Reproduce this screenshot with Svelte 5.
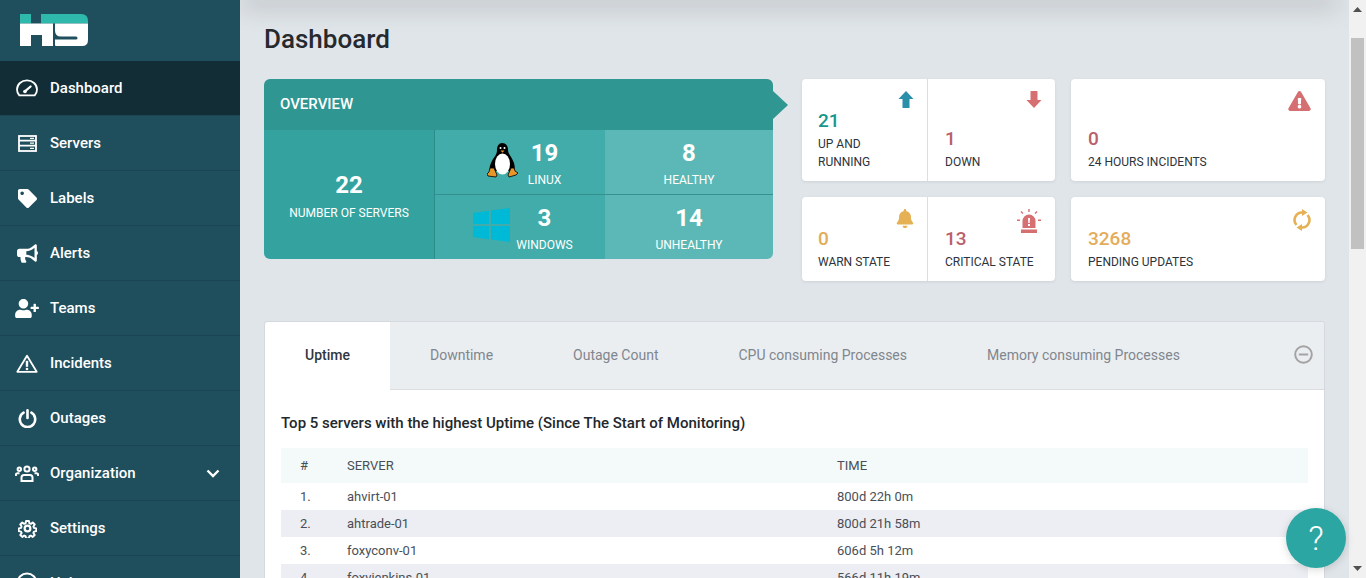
<script>
  const I = {
    tag: ['0 0 512 512', 'M0 252.118V48C0 21.49 21.49 0 48 0h204.118a48 48 0 0 1 33.941 14.059l211.882 211.882c18.745 18.745 18.745 49.137 0 67.882L293.823 497.941c-18.745 18.745-49.137 18.745-67.882 0L14.059 286.059A48 48 0 0 1 0 252.118zM112 64c-26.51 0-48 21.49-48 48s21.49 48 48 48 48-21.49 48-48-21.49-48-48-48z'],
    horn: ['0 0 576 512', 'M576 240c0-23.63-12.95-44.04-32-55.12V32.01C544 23.26 537.02 0 512 0c-7.12 0-14.19 2.38-19.98 7.02l-85.03 68.03C364.28 109.19 310.66 128 256 128H64c-35.35 0-64 28.65-64 64v96c0 35.35 28.65 64 64 64h33.7c-1.39 10.48-2.18 21.14-2.18 32 0 39.77 9.26 77.35 25.56 110.94 5.19 10.69 16.52 17.06 28.4 17.06h74.28c26.05 0 41.69-29.84 25.9-50.56-16.4-21.52-26.15-48.36-26.15-77.44 0-11.11 1.62-21.79 4.41-32H256c54.66 0 108.28 18.81 150.98 52.95l85.03 68.03a32.023 32.023 0 0 0 19.98 7.02c24.92 0 32-22.78 32-32V295.13C563.05 284.04 576 263.63 576 240zm-96 141.42l-33.05-26.44C392.95 311.78 325.12 288 256 288v-96c69.12 0 136.95-23.78 190.95-66.98L480 98.58v282.84z'],
    team: ['0 0 640 512', 'M624 208h-64v-64c0-8.8-7.2-16-16-16h-32c-8.8 0-16 7.2-16 16v64h-64c-8.8 0-16 7.2-16 16v32c0 8.8 7.2 16 16 16h64v64c0 8.8 7.2 16 16 16h32c8.8 0 16-7.2 16-16v-64h64c8.8 0 16-7.2 16-16v-32c0-8.8-7.2-16-16-16zm-400 48c70.7 0 128-57.3 128-128S294.7 0 224 0 96 57.3 96 128s57.3 128 128 128zm89.6 32h-16.7c-22.2 10.2-46.9 16-72.9 16s-50.6-5.8-72.9-16h-16.7C60.2 288 0 348.2 0 422.4V464c0 26.5 21.5 48 48 48h352c26.5 0 48-21.5 48-48v-41.6c0-74.2-60.2-134.4-134.4-134.4z'],
    bell: ['0 0 448 512', 'M224 512c35.32 0 63.97-28.65 63.97-64H160.03c0 35.35 28.65 64 63.97 64zm215.39-149.71c-19.32-20.76-55.47-51.99-55.47-154.29 0-77.7-54.48-139.9-127.94-155.16V32c0-17.67-14.32-32-31.98-32s-31.98 14.33-31.98 32v20.84C118.56 68.1 64.08 130.3 64.08 208c0 102.3-36.15 133.53-55.47 154.29-6 6.45-8.66 14.16-8.61 21.71.11 16.4 12.98 32 32.1 32h383.8c19.12 0 32-15.6 32.1-32 .05-7.55-2.61-15.27-8.61-21.71z'],
    warn: ['0 0 576 512', 'M569.517 440.013C587.975 472.007 564.806 512 527.94 512H48.054c-36.937 0-59.999-40.055-41.577-71.987L246.423 24.035c18.467-32.009 64.72-31.951 83.154 0l239.94 416zM288 354c-25.405 0-46 20.595-46 46s20.595 46 46 46 46-20.595 46-46-20.595-46-46-46zm-43.673-165.346l7.418 136c.347 6.364 5.609 11.346 11.982 11.346h48.546c6.373 0 11.635-4.982 11.982-11.346l7.418-136c.375-6.874-5.098-12.654-11.982-12.654h-63.383c-6.884 0-12.356 5.78-11.981 12.654z']
  };
  const nav = [
    { label: 'Dashboard', icon: 'gauge', active: true },
    { label: 'Servers', icon: 'servers' },
    { label: 'Labels', icon: 'tag' },
    { label: 'Alerts', icon: 'horn' },
    { label: 'Teams', icon: 'team' },
    { label: 'Incidents', icon: 'incident' },
    { label: 'Outages', icon: 'power' },
    { label: 'Organization', icon: 'org', chevron: true },
    { label: 'Settings', icon: 'cog' },
    { label: 'Help', icon: 'help' }
  ];
  const tabs = ['Uptime', 'Downtime', 'Outage Count', 'CPU consuming Processes', 'Memory consuming Processes'];
  const rows = [
    ['1.', 'ahvirt-01', '800d 22h 0m'],
    ['2.', 'ahtrade-01', '800d 21h 58m'],
    ['3.', 'foxyconv-01', '606d 5h 12m'],
    ['4.', 'foxyjenkins-01', '566d 11h 19m']
  ];
</script>

<div class="shell">
  <aside class="side">
    <div class="logo">
      <svg width="68" height="32" viewBox="20 14 68 32">
        <path fill="#2fb8ac" d="M20 14h11v9.500H20zM41 14h40q7 0 7 7v2.500H41z" />
        <path fill="#fff" d="M20 23.500h33V46H42V35H31v11H20zM55 23.500h33V40q0 6-6 6H56q-1 0-1-1v-5.500h21q1.500 0 1.500-1.500t-1.500-1.500H61q-6 0-6-6z" />
      </svg>
    </div>
    <nav>
      {#each nav as n}
        <div class="item" class:active={n.active}>
          <span class="ico">
            {#if n.icon === 'gauge'}
              <svg width="22" height="18" viewBox="0 0 22 18" fill="none" stroke="#fff" stroke-width="1.800">
                <path d="M3.300 16.400C1.800 14.800 1 12.800 1 10.600 1 5.300 5.500 1.300 11 1.300s10 4 10 9.300c0 2.200-.8 4.200-2.300 5.800z" />
                <path d="M8.600 12.600 14.600 7.500" stroke-width="2.200" stroke-linecap="round" />
                <circle cx="9" cy="12.500" r="1.800" fill="#fff" stroke="none" />
              </svg>
            {:else if n.icon === 'servers'}
              <svg width="19" height="17" viewBox="0 0 19 17" fill="none" stroke="#fff" stroke-width="1.800">
                <rect x="1" y="1" width="17" height="15" />
                <path d="M1 5.700h17M1 10.700h17" />
                <path d="M12 3.300h4M12 8.200h4M12 13.300h4" stroke-width="1.300" />
              </svg>
            {:else if n.icon === 'incident'}
              <svg width="22" height="19" viewBox="0 0 22 19" fill="none" stroke="#fff">
                <path d="M11 1.800 1.300 17.800h19.400z" stroke-width="1.800" stroke-linejoin="round" />
                <path d="M11 6.800v6" stroke-width="2.400" />
                <circle cx="11" cy="15" r="1.300" fill="#fff" stroke="none" />
              </svg>
            {:else if n.icon === 'power'}
              <svg width="19" height="19" viewBox="0 0 19 19" fill="none" stroke="#fff" stroke-width="2.600" stroke-linecap="round">
                <path d="M5.600 3.700a7.700 7.700 0 1 0 7.800 0" />
                <path d="M9.500 1.400v7.500" />
              </svg>
            {:else if n.icon === 'org'}
              <svg width="24" height="17" viewBox="0 0 24 17" fill="none" stroke="#fff" stroke-width="2">
                <circle cx="12" cy="4" r="2.600" />
                <circle cx="4.300" cy="4.300" r="1.700" />
                <circle cx="19.700" cy="4.300" r="1.700" />
                <path d="M6.500 16V12.500q0-2.500 2.500-2.500h6q2.500 0 2.500 2.500V16zM.9 11V9.700Q.9 8.200 2.500 8.200h2M23.100 11V9.700q0-1.500-1.600-1.500h-2" />
              </svg>
            {:else if n.icon === 'cog'}
              <svg width="19" height="19" viewBox="0 0 24 24" fill="none" stroke="#fff" stroke-width="2.800" stroke-linejoin="round">
                <circle cx="12" cy="12" r="3.600" />
                <path d="M10 1.800h4l.7 3.300 1.900.8 2.800-1.800 2.700 2.800-1.800 2.700.8 2 3.200.7v3.800l-3.200.7-.8 1.900 1.800 2.800-2.700 2.700-2.800-1.800-1.900.8-.7 3.200h-4l-.7-3.200-1.900-.8-2.800 1.800-2.700-2.700 1.800-2.800-.8-1.900-3.200-.7v-3.800l3.200-.7.8-2-1.800-2.700 2.700-2.800 2.800 1.800 1.900-.8z" transform="translate(1.200 .8) scale(.9)" />
              </svg>
            {:else if n.icon === 'help'}
              <svg width="22" height="22" viewBox="0 0 22 22" fill="none" stroke="#fff" stroke-width="2"><circle cx="11" cy="11" r="9.500" /></svg>
            {:else}
              <svg class="fa-{n.icon}" viewBox={I[n.icon][0]} fill="#fff"><path d={I[n.icon][1]} /></svg>
            {/if}
          </span>
          <span class="lbl">{n.label}</span>
          {#if n.chevron}
            <svg class="chev" width="14" height="9" viewBox="0 0 14 9" fill="none" stroke="#fff" stroke-width="2.400"><path d="M1.500 1.500 7 7l5.500-5.500" /></svg>
          {/if}
        </div>
      {/each}
    </nav>
  </aside>

  <main class="main">
    <div class="shade"></div>
    <h1>Dashboard</h1>
    <section class="top">
      <div class="overview">
        <div class="ov-head">OVERVIEW</div>
        <div class="ov-body">
          <div class="ov-total"><b>22</b><span>NUMBER OF SERVERS</span></div>
          <div class="ov-cell mid b-btm">
            <svg class="tux" width="31" height="37" viewBox="0 0 31 37">
              <path fill="#000" d="M15 0c4 0 6 3 6 7 0 4 4 7 6 13 1 4 1 6 0 8l-24 0c-1-3 0-6 2-10 2-4 5-6 5-11 0-4 2-7 5-7z" />
              <ellipse cx="15.500" cy="21" rx="7.500" ry="10.500" fill="#fff" />
              <path fill="#e8952a" stroke="#000" stroke-width=".8" d="M7 25l3 7-1 2-8-1-1-2 2-2 1-4zM24 25l-3 7 1 2 7-2 2-2-3-2-1-3z" />
              <path fill="#e8952a" d="M13.500 7.500h4l-2 2.200z" />
              <circle cx="13.500" cy="5" r="1" fill="#fff" /><circle cx="17.500" cy="5" r="1" fill="#fff" />
            </svg>
            <b>19</b><span>LINUX</span>
          </div>
          <div class="ov-cell right b-btm"><b>8</b><span>HEALTHY</span></div>
          <div class="ov-cell mid">
            <svg class="win" width="37" height="34" viewBox="0 0 37 34" fill="#00b9d6">
              <path d="M0 5 16 2.800V16H0zM18 2.500 37 0v16H18zM0 18h16v13.200L0 29zM18 18h19v16l-19-2.500z" />
            </svg>
            <b>3</b><span>WINDOWS</span>
          </div>
          <div class="ov-cell right"><b>14</b><span>UNHEALTHY</span></div>
        </div>
      </div>

      <div class="cards">
        <div class="card split tall">
          <div class="stat">
            <svg class="sic arrow" viewBox="0 0 15 17"><path fill="#2a8fa8" d="M7.500 0 15 8h-4v8.500q0 .5-.5.5h-6q-.5 0-.5-.5V8H0z" /></svg>
            <strong class="teal">21</strong><span>UP AND<br />RUNNING</span>
          </div>
          <div class="stat">
            <svg class="sic arrow" viewBox="0 0 15 17"><path fill="#d56f72" d="M7.500 17 15 9h-4V.5q0-.5-.5-.5h-6Q4 0 4 .5V9H0z" /></svg>
            <strong class="red">1</strong><span>DOWN</span>
          </div>
        </div>
        <div class="card tall">
          <div class="stat">
            <svg class="sic big" viewBox={I.warn[0]} fill="#d56f72"><path d={I.warn[1]} /></svg>
            <strong class="red">0</strong><span>24 HOURS INCIDENTS</span>
          </div>
        </div>
        <div class="card split">
          <div class="stat">
            <svg class="sic bell" viewBox={I.bell[0]} fill="#e5b154"><path d={I.bell[1]} /></svg>
            <strong class="amber">0</strong><span>WARN STATE</span>
          </div>
          <div class="stat">
            <svg class="sic siren" viewBox="0 0 24 24" fill="#d56f72">
              <path d="M5.500 19v-7a6.500 6.500 0 0 1 13 0v7z" />
              <path d="M4 20.500h16V24H4z" />
              <path d="M11.300 0h1.400v3h-1.400zM3.500 3l1-1 2 2-1 1zM20.500 3l-1-1-2 2 1 1zM0 10.500h3v1.400H0zM21 10.500h3v1.400h-3z" />
              <path fill="#fff" d="M11 9h2l-.3 5h-1.400zM11 15h2v2h-2z" />
            </svg>
            <strong class="red">13</strong><span>CRITICAL STATE</span>
          </div>
        </div>
        <div class="card">
          <div class="stat">
            <svg class="sic sync" viewBox="0 0 18 22">
              <path fill="none" stroke="#e5b154" stroke-width="2.600" d="M3.500 16A7.500 7.500 0 0 1 9.500 3.500M14.500 6a7.500 7.500 0 0 1-6 12.500" />
              <path fill="#e5b154" d="M9 0l5.500 3.500L9 7zM9 15l-5.500 3.500L9 22z" />
            </svg>
            <strong class="amber">3268</strong><span>PENDING UPDATES</span>
          </div>
        </div>
      </div>
    </section>

    <section class="panel">
      <div class="tabs">
        {#each tabs as t, i}
          <div class="tab" class:on={i === 0}>{t}</div>
        {/each}
        <svg class="minus" width="19" height="19" viewBox="0 0 19 19" fill="none" stroke="#a3a3a3" stroke-width="2"><circle cx="9.500" cy="9.500" r="8.300" /><path d="M4.800 9.500h9.400" /></svg>
      </div>
      <div class="pane">
        <h2>Top 5 servers with the highest Uptime (Since The Start of Monitoring)</h2>
        <div class="table">
          <div class="row head"><span>#</span><span>SERVER</span><span>TIME</span></div>
          {#each rows as r}
            <div class="row"><span>{r[0]}</span><span>{r[1]}</span><span>{r[2]}</span></div>
          {/each}
        </div>
      </div>
    </section>
  </main>

  <div class="scrollbar">
    <svg width="9" height="5" viewBox="0 0 9 5"><path fill="#505050" d="M4.500 0 9 5H0z" /></svg>
    <div class="thumb"></div>
    <svg width="9" height="5" viewBox="0 0 9 5"><path fill="#505050" d="M4.500 5 9 0H0z" /></svg>
  </div>

  <div class="fab">?</div>
</div>

<style>
  :global(body) { margin: 0; font-family: Roboto, "Liberation Sans", sans-serif; }
  .shell { display: flex; height: 578px; width: 1366px; overflow: hidden; position: relative; background: #e0e5e9; }

  .side { width: 240px; flex: none; background: #1f4e5c; color: #fff; overflow: hidden; }
  .logo { height: 61px; padding: 14px 0 0 20px; box-sizing: border-box; }
  .logo svg { display: block; }
  .item { height: 54px; display: flex; align-items: center; padding-left: 15px; border-bottom: 1px solid #1b4552; font-size: 15px; font-weight: 500; }
  .item.active { background: #132d37; }
  .ico { width: 24px; margin-right: 11px; display: flex; justify-content: center; flex: none; }
  .ico svg { display: block; }
  .fa-tag { width: 19px; height: 19px; }
  .fa-horn { width: 21px; height: 19px; }
  .fa-team { width: 24px; height: 19px; }
  .lbl { flex: 1; }
  .chev { margin-right: 20px; }

  .main { flex: 1; min-width: 0; padding: 0 24px; position: relative; overflow: hidden; box-sizing: border-box; }
  .shade { position: absolute; left: 0; right: 10px; top: -10px; height: 10px; box-shadow: 0 5px 26px rgba(0, 0, 0, .26); }
  h1 { margin: 0; padding-top: 22px; height: 79px; box-sizing: border-box; font-size: 26px; line-height: 34px; font-weight: 500; color: #262a2e; }

  .top { display: flex; gap: 29px; align-items: flex-start; }
  .overview { width: 509px; flex: none; position: relative; color: #fff; border-radius: 6px; }
  .overview::after { content: ""; position: absolute; left: 509px; top: 12px; border-left: 15px solid #2f9692; border-top: 14px solid transparent; border-bottom: 14px solid transparent; }
  .ov-head { height: 51px; background: #2f9692; border-radius: 6px 6px 0 0; padding-left: 16px; font-size: 15px; font-weight: 500; line-height: 51px; box-sizing: border-box; }
  .ov-body { display: grid; grid-template-columns: 170px 171px 168px; grid-template-rows: 65px 64px; border-radius: 0 0 6px 6px; overflow: hidden; }
  .ov-total { grid-row: 1 / 3; background: #34a3a0; display: flex; flex-direction: column; align-items: center; justify-content: center; padding-top: 3px; box-sizing: border-box; }
  .ov-total b { font-size: 24px; font-weight: 700; line-height: 28px; }
  .ov-total span { font-size: 12px; line-height: 16px; margin-top: 6px; }
  .ov-cell { position: relative; display: flex; flex-direction: column; align-items: center; padding-top: 9px; box-sizing: border-box; }
  .ov-cell b { font-size: 24px; font-weight: 700; line-height: 28px; }
  .ov-cell span { font-size: 12px; line-height: 16px; margin-top: 5px; }
  .mid { background: #41aca9; border-left: 1px solid #2d8c89; padding-left: 49px; }
  .right { background: #5cb8b6; }
  .b-btm { border-bottom: 1px solid #36908e; }
  .tux { position: absolute; left: 52px; top: 13px; }
  .win { position: absolute; left: 38px; top: 13px; }

  .cards { flex: 1; display: grid; grid-template-columns: 253px 254px; gap: 16px; }
  .card { background: #fff; border-radius: 4px; box-shadow: 0 1px 3px rgba(60, 70, 90, .12); height: 84px; display: flex; }
  .card.tall { height: 102px; }
  .stat { flex: 1; position: relative; padding: 0 16px 10px 17px; display: flex; flex-direction: column; justify-content: flex-end; min-width: 0; }
  .split .stat:first-child { flex: none; width: 126px; padding-left: 16px; box-sizing: border-box; border-right: 1px solid #dcdde8; }
  .stat strong { font-size: 19px; line-height: 24px; font-weight: 500; }
  .stat span { font-size: 12px; line-height: 18px; margin-top: 2px; color: #2b333c; }
  .teal { color: #15978f; }
  .red { color: #b9606a; }
  .amber { color: #e3ac5a; }
  .sic { position: absolute; right: 14px; top: 12px; display: block; }
  .arrow { width: 16px; height: 17px; right: 13px; }
  .big { width: 23px; height: 20px; }
  .bell { width: 18px; height: 19px; right: 13px; }
  .siren { width: 24px; height: 24px; }
  .sync { width: 18px; height: 22px; top: 12px; }

  .panel { margin-top: 40px; background: #fff; border: 1px solid #d5d8dc; border-bottom: 0; border-radius: 4px 4px 0 0; }
  .tabs { display: flex; position: relative; height: 68px; background: #ebeef1; border-bottom: 1px solid #dadce0; box-sizing: border-box; border-radius: 4px 4px 0 0; }
  .tab { padding: 0 40px; line-height: 66px; font-size: 14px; color: #7f868d; }
  .tab.on { background: #fff; color: #2f3640; font-weight: 500; height: 68px; border-radius: 4px 0 0 0; }
  .minus { position: absolute; right: 11px; top: 23px; }
  .pane { padding: 24px 16px 0; }
  h2 { margin: 0; font-size: 15px; line-height: 18px; font-weight: 500; color: #23282d; }
  .table { margin-top: 16px; }
  .row { display: grid; grid-template-columns: 47px 490px 1fr; height: 27px; align-items: center; font-size: 13px; color: #4a4f57; padding-left: 19px; }
  .row.head { height: 35px; background: #f3faf9; }
  .row:nth-child(odd):not(.head) { background: #eceef3; }

  .scrollbar { width: 17px; flex: none; background: #f1f1f1; display: flex; flex-direction: column; align-items: center; padding-top: 7px; box-sizing: border-box; height: 578px; }
  .thumb { width: 13px; height: 211px; background: #c1c1c1; margin-top: 26px; margin-bottom: auto; }
  .scrollbar svg:last-child { margin-bottom: 7px; }

  .fab { position: absolute; left: 1286px; top: 508px; width: 60px; height: 60px; border-radius: 50%; background: #2ba6a3; color: #fff; font-size: 34px; font-weight: 300; display: flex; align-items: center; justify-content: center; box-shadow: 0 2px 8px rgba(0,0,0,.15); }
</style>
